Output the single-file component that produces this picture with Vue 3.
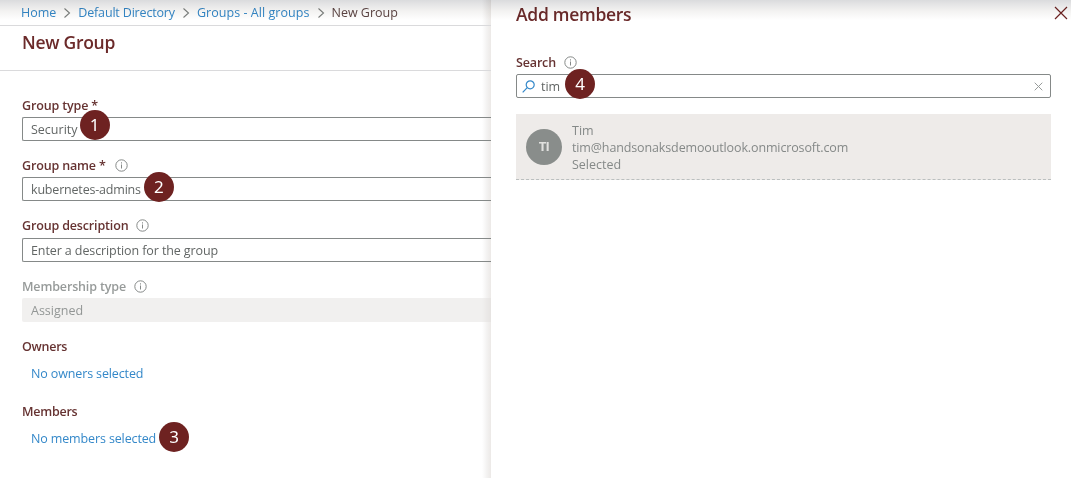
<script setup>
const crumbs = [
  { text: 'Home', cls: 'c-home' },
  { text: 'Default Directory', cls: 'c-dir' },
  { text: 'Groups - All groups', cls: 'c-groups' },
]
const fields = [
  { label: 'Group type *', cls: 'f-type', value: 'Security', badge: 1 },
  { label: 'Group name *', cls: 'f-name', value: 'kubernetes-admins', info: true, badge: 2 },
  { label: 'Group description', cls: 'f-desc', value: 'Enter a description for the group', info: true },
  { label: 'Membership type', cls: 'f-member', value: 'Assigned', info: true, disabled: true },
]
</script>

<template>
  <div class="page">
    <main class="blade">
      <nav class="crumbs">
        <template v-for="c in crumbs" :key="c.text">
          <a :class="c.cls">{{ c.text }}</a>
          <svg class="chev" width="8" height="12" viewBox="0 0 8 12"><path d="M1.5 1.5 6.5 6 1.5 10.5" /></svg>
        </template>
        <span class="c-current">New Group</span>
      </nav>
      <header class="heading"><h1 class="t-main">New Group</h1></header>
      <section class="form">
        <div v-for="f in fields" :key="f.label" class="field" :class="[f.cls, { disabled: f.disabled }]">
          <div class="label">
            <span>{{ f.label }}</span>
            <svg v-if="f.info" class="info" width="13" height="13" viewBox="0 0 13 13">
              <circle cx="6.5" cy="6.5" r="5.7" /><path d="M6.5 5.5V9.5M6.5 3.3V4.5" />
            </svg>
          </div>
          <div class="input"><span class="value">{{ f.value }}<b v-if="f.badge" class="badge">{{ f.badge }}</b></span></div>
        </div>
        <div class="group">
          <div class="label"><span class="l-owners">Owners</span></div>
          <a class="pick p-owners">No owners selected</a>
        </div>
        <div class="group">
          <div class="label"><span class="l-members">Members</span></div>
          <a class="pick p-members">No members selected<b class="badge">3</b></a>
        </div>
      </section>
    </main>
    <aside class="panel">
      <div class="panel-head">
        <h1 class="t-panel">Add members</h1>
        <svg class="close" width="14" height="14" viewBox="0 0 14 14"><path d="M1 1 13 13M13 1 1 13" /></svg>
      </div>
      <div class="label search-label">
        <span>Search</span>
        <svg class="info" width="13" height="13" viewBox="0 0 13 13">
          <circle cx="6.5" cy="6.5" r="5.7" /><path d="M6.5 5.5V9.5M6.5 3.3V4.5" />
        </svg>
      </div>
      <div class="input search">
        <svg class="lens" width="13" height="13" viewBox="0 0 13 13"><circle cx="8.2" cy="4.8" r="4" /><path d="M5.2 7.7.7 12.3" /></svg>
        <span class="value v-tim">tim<b class="badge">4</b></span>
        <svg class="clear" width="9" height="9" viewBox="0 0 9 9"><path d="M.7.7 8.3 8.3M8.3.7.7 8.3" /></svg>
      </div>
      <div class="person">
        <div class="avatar">TI</div>
        <div class="details">
          <span class="d-name">Tim</span>
          <span class="d-mail">tim@handsonaksdemooutlook.onmicrosoft.com</span>
          <span class="d-state">Selected</span>
        </div>
      </div>
    </aside>
    <div class="top-shade"></div>
  </div>
</template>

<style>
body { margin: 0; background: #fff; }
</style>

<style scoped>
* { box-sizing: border-box; }
.page { position: relative; display: flex; width: 1071px; height: 478px; overflow: hidden; background: #fff; font-family: "Open Sans", "Noto Sans", sans-serif; font-size: 12.5px; line-height: 17px; color: #626665; white-space: nowrap; }
.top-shade { position: absolute; inset: 0 0 auto; height: 20px; background: linear-gradient(#dadbdd, #e4e4e5 20%, #f3f2f1 55%, #fff); mix-blend-mode: multiply; pointer-events: none; }
.blade { width: 491px; background: linear-gradient(to left, #ece9e7, #f3f2f1 4px, #fff 9px); }
.crumbs { display: flex; align-items: center; height: 26px; padding-left: 21px; border-bottom: 1px solid #dadadc; color: #5d4544; }
.crumbs a, .pick { color: #3488c9; }
.c-dir { letter-spacing: -0.17px; }
.c-groups { letter-spacing: 0.05px; }
.chev { margin: 0 7px; fill: none; stroke: #7d807f; stroke-width: 1.1; }
.heading { display: flex; align-items: center; height: 45px; padding-left: 22px; border-bottom: 1px solid #dadadc; }
h1 { margin: 0; font-size: 17.5px; line-height: 24px; font-weight: 600; letter-spacing: -0.28px; color: #6b2a2a; }
.t-main { margin-top: -12px; }
.form { padding: 22px 0 0 22px; }
.label { display: flex; align-items: center; height: 24px; font-weight: 550; font-size: 12.5px; letter-spacing: -0.15px; color: #663332; }
.info { margin-left: 8px; fill: none; stroke: #858988; stroke-width: 1; }
.f-name .info { margin-left: 9px; }
.input { display: flex; align-items: center; height: 24px; border: 1px solid #858988; border-radius: 2px; background: #fff; padding-left: 8px; }
.field { height: 60px; }
.f-desc { height: 61px; }
.f-desc .input { margin-top: 1px; }
.field .input { border-right: 0; border-radius: 2px 0 0 2px; background: transparent; }
.f-name .value { letter-spacing: -0.19px; }
.f-desc .value { letter-spacing: -0.1px; }
.disabled .label { color: #979b9a; }
.disabled .input { border-color: transparent; background: rgba(225,222,219,.45); color: #929695; }
.value, .pick { position: relative; }
.group { height: 65px; }
.pick { display: inline-block; margin: 7px 0 0 9px; letter-spacing: -0.13px; }
.l-owners, .l-members { margin-top: 1px; letter-spacing: -0.25px; }
.badge { position: absolute; display: flex; align-items: center; justify-content: center; width: 30px; height: 30px; border-radius: 50%; background: #6e2221; color: #fff; font: 400 17px/30px "Noto Sans", sans-serif; letter-spacing: 0; left: calc(100% + 2px); top: -11px; }
.f-name .badge { left: calc(100% + 3px); top: -9px; }
.p-members .badge { left: calc(100% + 3px); top: -8px; }
.v-tim .badge { left: calc(100% + 5px); top: -9px; }
.panel { position: relative; flex: 1; padding: 0 20px 0 25px; background: #fff; }
.panel-head { display: flex; justify-content: space-between; height: 50px; }
.t-panel { margin-top: 2px; }
.close { margin: 6px -17px 0 0; fill: none; stroke: #6e2221; stroke-width: 1.2; }
.search { padding: 0 7px 0 5px; }
.lens { fill: none; stroke: #3488c9; stroke-width: 1.2; }
.search .value { margin-left: 6px; }
.clear { margin-left: auto; fill: none; stroke: #979b9a; stroke-width: 1; }
.person { display: flex; align-items: center; height: 66px; margin-top: 16px; padding-left: 10px; background: #eeebe9; border-bottom: 1px dashed #bbbfbf; color: #858988; }
.avatar { display: flex; align-items: center; justify-content: center; width: 36px; height: 36px; border-radius: 50%; background: #898d8b; color: #e1e1df; font-size: 13px; font-weight: 700; letter-spacing: -0.6px; }
.details { display: flex; flex-direction: column; margin: 2px 0 0 10px; }
.details span { align-self: flex-start; }
.d-mail { letter-spacing: -0.13px; }
</style>
